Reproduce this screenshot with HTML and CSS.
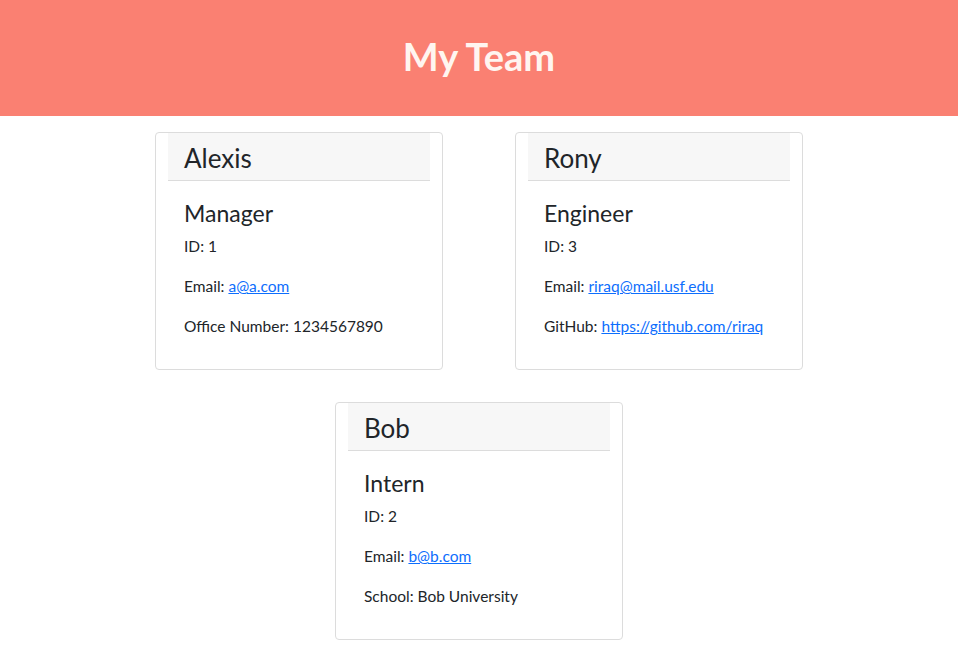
FILE: index.html
```html
<!DOCTYPE html>
<html>
<head>
<meta charset="utf-8">
<title>My Team</title>
<link rel="stylesheet" href="styles.css">
</head>
<body>
<header class="banner"><h1 class="banner-title">My Team</h1></header>
<main class="team">
  <div class="team-row">
    <div class="slot">
      <div class="card">
        <div class="card-header"><h2 class="card-name">Alexis</h2></div>
        <div class="card-body">
          <h3 class="card-role">Manager</h3>
          <p class="card-line">ID: 1</p>
          <p class="card-line">Email: <a href="#">a@a.com</a></p>
          <p class="card-line">Office Number: 1234567890</p>
        </div>
      </div>
    </div>
    <div class="slot">
      <div class="card">
        <div class="card-header"><h2 class="card-name">Rony</h2></div>
        <div class="card-body">
          <h3 class="card-role">Engineer</h3>
          <p class="card-line">ID: 3</p>
          <p class="card-line">Email: <a href="#">riraq@mail.usf.edu</a></p>
          <p class="card-line">GitHub: <a href="#">https://github.com/riraq</a></p>
        </div>
      </div>
    </div>
  </div>
  <div class="team-row single">
    <div class="slot">
      <div class="card">
        <div class="card-header"><h2 class="card-name">Bob</h2></div>
        <div class="card-body">
          <h3 class="card-role">Intern</h3>
          <p class="card-line">ID: 2</p>
          <p class="card-line">Email: <a href="#">b@b.com</a></p>
          <p class="card-line">School: Bob University</p>
        </div>
      </div>
    </div>
  </div>
</main>
</body>
</html>
```
FILE: styles.css
```css
* { box-sizing: border-box; }
body {
  margin: 0;
  font-family: "Lato", "Open Sans", sans-serif;
  font-size: 16px;
  line-height: 1.5;
  color: #212529;
  background: #fff;
}
.banner {
  background: #fa8072;
  height: 116px;
  display: flex;
  align-items: center;
  justify-content: center;
}
.banner-title {
  margin: 0 0 2px;
  color: #fff5f0;
  font-size: 38px;
  font-weight: 700;
  line-height: 1.2;
}
.team {
  width: 720px;
  margin: 16px auto 0;
  display: flex;
  flex-direction: column;
  gap: 32px;
}
.team-row {
  display: grid;
  grid-template-columns: 360px 360px;
}
.team-row.single {
  grid-template-columns: 360px;
  justify-content: center;
}
.slot {
  display: flex;
  justify-content: center;
}
.card {
  width: 288px;
  border: 1px solid #dcdcdc;
  border-radius: 4px;
  background: #fff;
}
.card-header {
  margin: 0 12px;
  background: #f7f7f7;
  border-bottom: 1px solid #dcdcdc;
  padding: 8px 16px 4px;
}
.card-name {
  margin: 0;
  font-size: 26px;
  font-weight: 400;
  line-height: 35px;
}
.card-body {
  padding: 18px 28px 15px;
}
.card-role {
  margin: 0 0 7px;
  font-size: 23px;
  font-weight: 400;
  line-height: 28px;
}
.card-line {
  margin: 0 0 16px;
  font-size: 15.5px;
  line-height: 24px;
}
.card-line a {
  color: #0d6efd;
  text-decoration: underline;
}
```
